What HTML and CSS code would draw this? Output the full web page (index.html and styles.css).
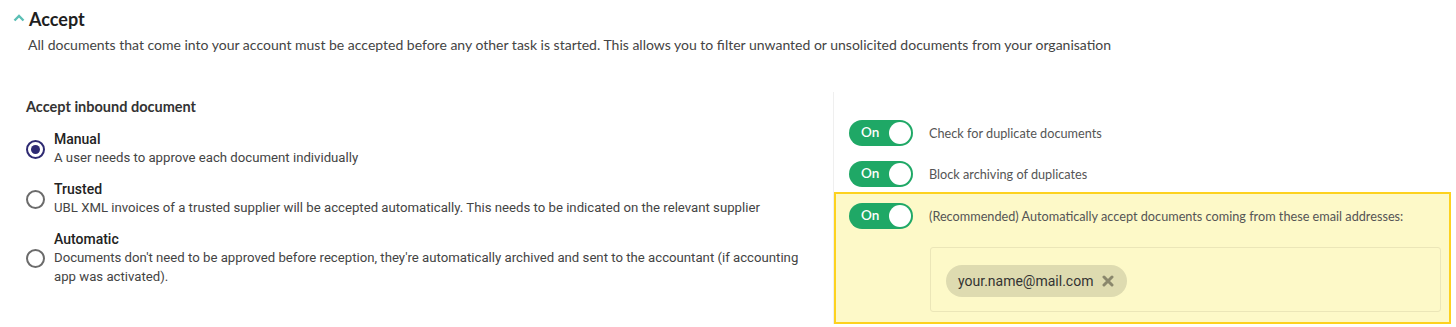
FILE: index.html
```html
<!DOCTYPE html>
<html>
<head>
<meta charset="utf-8">
<link rel="stylesheet" href="styles.css">
</head>
<body>
<section class="section">
  <header class="sec-head">
    <svg class="chev" width="12" height="8" viewBox="0 0 12 8"><path d="M1.5 6.5 L6 2 L10.5 6.5" fill="none" stroke="#5bbfb5" stroke-width="2.4"/></svg>
    <h2 class="title">Accept</h2>
  </header>
  <p class="intro">All documents that come into your account must be accepted before any other task is started. This allows you to filter unwanted or unsolicited documents from your organisation</p>

  <div class="cols">
    <div class="left">
      <h3 class="group-title">Accept inbound document</h3>
      <div class="radio-list">
        <label class="radio-row">
          <span class="radio checked"></span>
          <span class="radio-text">
            <span class="radio-label">Manual</span>
            <span class="radio-desc">A user needs to approve each document individually</span>
          </span>
        </label>
        <label class="radio-row">
          <span class="radio"></span>
          <span class="radio-text">
            <span class="radio-label">Trusted</span>
            <span class="radio-desc">UBL XML invoices of a trusted supplier will be accepted automatically. This needs to be indicated on the relevant supplier</span>
          </span>
        </label>
        <label class="radio-row">
          <span class="radio"></span>
          <span class="radio-text">
            <span class="radio-label">Automatic</span>
            <span class="radio-desc">Documents don't need to be approved before reception, they're automatically archived and sent to the accountant (if accounting app was activated).</span>
          </span>
        </label>
      </div>
    </div>
    <div class="right">
      <div class="toggle-row">
        <span class="toggle"><span class="toggle-on">On</span><span class="knob"></span></span>
        <span class="toggle-label">Check for duplicate documents</span>
      </div>
      <div class="toggle-row">
        <span class="toggle"><span class="toggle-on">On</span><span class="knob"></span></span>
        <span class="toggle-label">Block archiving of duplicates</span>
      </div>
      <div class="highlight">
        <div class="toggle-row">
          <span class="toggle"><span class="toggle-on">On</span><span class="knob"></span></span>
          <span class="toggle-label">(Recommended) Automatically accept documents coming from these email addresses:</span>
        </div>
        <div class="email-box">
          <span class="chip">your.name@mail.com
            <svg class="chip-x" width="12" height="12" viewBox="0 0 12 12"><path d="M2 2 L10 10 M10 2 L2 10" stroke="#8a876c" stroke-width="3" stroke-linecap="round"/></svg>
          </span>
        </div>
      </div>
    </div>
  </div>
</section>
</body>
</html>
```

FILE: styles.css
```css
* { box-sizing: border-box; }
html, body { margin: 0; background: #fff; }
body {
  font-family: Lato, "Open Sans", sans-serif;
  color: #333;
  width: 1456px;
  height: 327px;
  overflow: hidden;
}
.section { padding: 8px 0 0 0; }
.sec-head {
  display: flex;
  align-items: center;
  gap: 4px;
  padding-left: 13px;
  height: 22px;
}
.chev { margin-top: -3px; }
.title {
  margin: 0;
  font-size: 18px;
  font-weight: 700;
  color: #1f1f1f;
  line-height: 22px;
}
.intro {
  margin: 6px 0 0 28px;
  font-size: 14px;
  color: #444;
  line-height: 18px;
}
.cols {
  display: grid;
  grid-template-columns: 833px 1fr;
  margin-top: 38px;
}
.left { padding: 6px 0 0 26px; }
.group-title {
  margin: 0;
  font-size: 14.5px;
  font-weight: 700;
  color: #333;
  line-height: 18px;
}
.radio-list {
  display: flex;
  flex-direction: column;
  gap: 13px;
  margin-top: 14px;
}
.radio-row {
  display: flex;
  align-items: center;
  gap: 9px;
  font-family: Roboto, "Liberation Sans", sans-serif;
}
.radio {
  width: 19px;
  height: 19px;
  border-radius: 50%;
  border: 2px solid #6b6b6b;
  flex: none;
  position: relative;
  margin-top: 1px;
}
.radio.checked { border-color: #2e2a72; }
.radio.checked::after {
  content: "";
  position: absolute;
  left: 3px; top: 3px;
  width: 9px; height: 9px;
  border-radius: 50%;
  background: #2e2a72;
}
.radio-text { display: flex; flex-direction: column; }
.radio-label {
  font-size: 14px;
  font-weight: 500;
  color: #222;
  line-height: 18px;
}
.radio-desc {
  font-size: 13.2px;
  color: #444;
  line-height: 19px;
  max-width: 750px;
}
.right {
  border-left: 1px solid #efefef;
  display: flex;
  flex-direction: column;
  padding-top: 29px;
}
.toggle-row {
  display: flex;
  align-items: center;
  gap: 16px;
  padding-left: 15px;
  height: 24px;
}
.right > .toggle-row + .toggle-row { margin-top: 17px; }
.toggle {
  width: 64px;
  height: 26px;
  border-radius: 13px;
  background: #1fa866;
  display: flex;
  align-items: center;
  justify-content: space-between;
  padding: 0 2px 0 12px;
  flex: none;
}
.toggle-on {
  font-family: Lato, Roboto, sans-serif;
  font-size: 13.5px;
  font-weight: 600;
  color: #fff;
  margin-top: -3px;
}
.knob {
  width: 22px;
  height: 22px;
  border-radius: 50%;
  background: #fff;
}
.toggle-label {
  font-size: 12.7px;
  color: #555;
}
.highlight {
  margin-top: 6px;
  margin-right: 5px;
  background: #fdf9c8;
  border: 2px solid #fdd21f;
  padding: 10px 8px 11px 0;
  height: 132px;
}
.highlight .toggle-row { padding-left: 13px; }
.email-box {
  margin: 19px 0 0 94px;
  height: 65px;
  border: 1px solid #ebe6b8;
  border-radius: 3px;
  padding: 17px 0 0 15px;
}
.chip {
  display: inline-flex;
  align-items: center;
  gap: 9px;
  height: 32px;
  padding: 0 13px 0 12px;
  border-radius: 16px;
  background: #dedbb0;
  font-family: Roboto, "Liberation Sans", sans-serif;
  font-size: 14px;
  color: #333;
}
```
